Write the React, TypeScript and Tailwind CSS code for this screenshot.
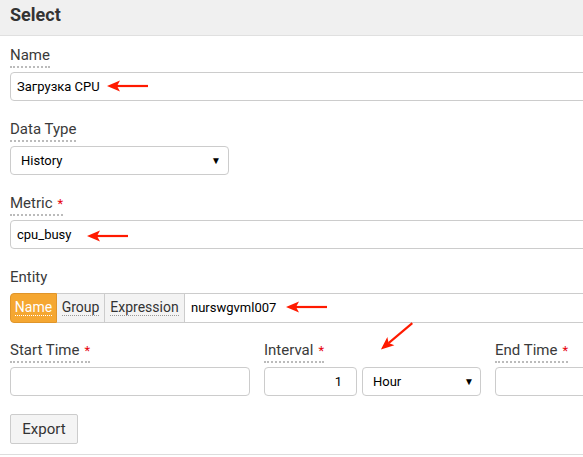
import React from "react";

const Label = ({ text, required, underline = true }: { text: string; required?: boolean; underline?: boolean }) => (
  <div className="h-[20px] flex items-start mb-[5px]">
    <span
      className={`text-[15px] leading-[17px] text-[#3a3a3a] pb-[2px] ${
        underline ? "border-b-2 border-dotted border-[#bbb]" : ""
      }`}
    >
      {text}
      {required && <span className="text-red-600 ml-[5px] text-[13px] align-top">*</span>}
    </span>
  </div>
);

const Arrow = ({ className, rotate = 0 }: { className: string; rotate?: number }) => (
  <svg
    className={`absolute ${className}`}
    width="42"
    height="12"
    viewBox="0 0 42 12"
    style={{ transform: `rotate(${rotate}deg)` }}
  >
    <line x1="10" y1="6" x2="41" y2="6" stroke="#ff1a00" strokeWidth="2.2" />
    <polygon points="0,6 13,0.5 10,6 13,11.5" fill="#ff1a00" />
  </svg>
);

const field = "h-[29px] border border-[#ccc] rounded-[4px] bg-white text-[13px] text-black";

export default function App() {
  return (
    <div className="relative w-[583px] h-[457px] overflow-hidden bg-white font-['Roboto',sans-serif]">
      <div className="h-[36px] bg-[#f0f0f0] border-b border-[#e0e0e0] px-[10px] flex items-center">
        <h1 className="text-[18px] font-bold text-[#333] -mt-[6px]">Select</h1>
      </div>

      <div className="px-[10px] pt-[11px]">
        <Label text="Name" />
        <div className={`${field} w-[600px] flex items-center px-[6px]`}>Загрузка CPU</div>

        <div className="mt-[20px]">
          <Label text="Data Type" />
          <div className={`${field} w-[219px] flex items-center justify-between pl-[10px] pr-[7px]`}>
            <span>History</span>
            <span className="text-[10px]">▼</span>
          </div>
        </div>

        <div className="mt-[20px]">
          <Label text="Metric" required />
          <div className={`${field} w-[600px] flex items-center px-[6px]`}>cpu_busy</div>
        </div>

        <div className="mt-[20px]">
          <Label text="Entity" underline={false} />
          <div className="flex h-[30px] w-[600px] -mt-[1px]">
            <div className="w-[47px] shrink-0 bg-[#f5a731] border border-[#e0952a] rounded-l-[4px] flex items-center justify-center text-[14px] text-white">
              <span className="border-b border-dotted border-white leading-[15px]">Name</span>
            </div>
            <div className="w-[48px] shrink-0 bg-[#f3f3f3] border-y border-r border-[#ccc] flex items-center justify-center text-[14px] text-[#333]">
              <span className="border-b border-dotted border-[#999] leading-[15px]">Group</span>
            </div>
            <div className="w-[80px] shrink-0 bg-[#f3f3f3] border-y border-r border-[#ccc] flex items-center justify-center text-[14px] text-[#333]">
              <span className="border-b border-dotted border-[#999] leading-[15px]">Expression</span>
            </div>
            <div className="flex-1 border-y border-[#ccc] flex items-center px-[6px] text-[13px] text-black">nurswgvml007</div>
          </div>
        </div>

        <div className="flex mt-[19px]">
          <div className="w-[254px] shrink-0">
            <Label text="Start Time" required />
            <div className={`${field} w-[240px]`} />
          </div>
          <div className="w-[231px] shrink-0">
            <Label text="Interval" required />
            <div className="flex gap-[5px]">
              <div className={`${field} w-[93px] shrink-0 flex items-center justify-end pr-[14px]`}>1</div>
              <div className={`${field} w-[119px] shrink-0 flex items-center justify-between pl-[10px] pr-[6px]`}>
                <span>Hour</span>
                <span className="text-[10px]">▼</span>
              </div>
            </div>
          </div>
          <div className="w-[150px] shrink-0">
            <Label text="End Time" required />
            <div className={`${field} w-[150px]`} />
          </div>
        </div>

        <button className="mt-[18px] h-[30px] w-[68px] bg-[#f4f4f4] border border-[#ccc] rounded-[2px] text-[15px] text-[#333]">
          Export
        </button>
      </div>
      <div className="absolute left-0 right-0 top-[454px] border-t border-[#ddd]" />

      <Arrow className="left-[107px] top-[80px]" />
      <Arrow className="left-[87px] top-[230px]" />
      <Arrow className="left-[286px] top-[301px]" />
      <Arrow className="left-[376px] top-[330px]" rotate={-40} />
    </div>
  );
}
